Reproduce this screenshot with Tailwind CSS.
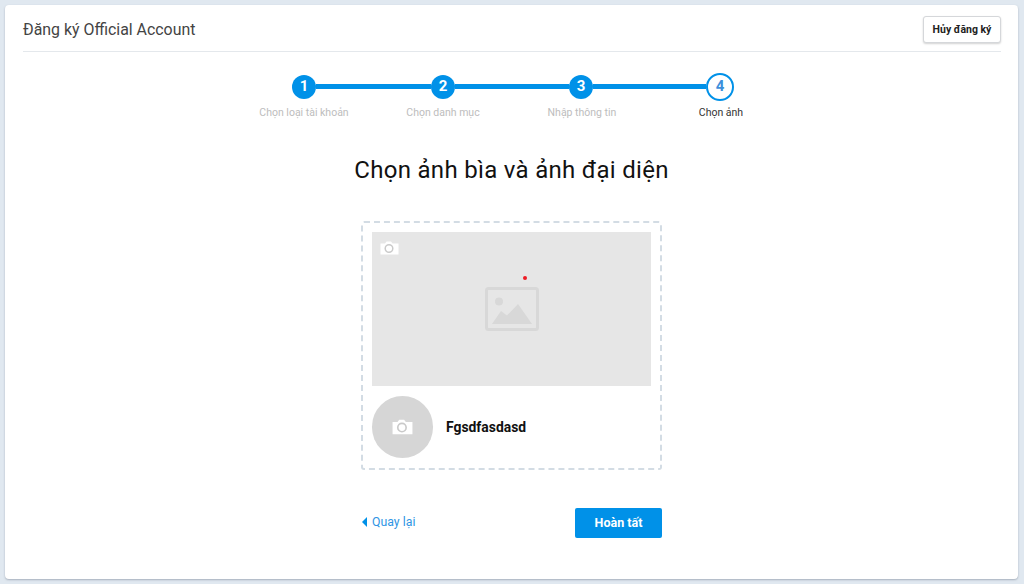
<!DOCTYPE html>
<html lang="vi">
<head>
<meta charset="utf-8">
<script src="https://cdn.jsdelivr.net/npm/@tailwindcss/browser@4"></script>
</head>
<body class="w-[1024px] h-[584px] overflow-hidden bg-[#e0e8f0] font-['Roboto',sans-serif]">
<div class="pt-[5px] pl-[5px] pr-[6px] pb-[5px] h-full">
  <main class="h-[574px] bg-white rounded-[4px] shadow-[0_1px_2px_rgba(120,130,145,0.55)] px-[18px] flex flex-col items-stretch">
    <header class="h-[47px] shrink-0 border-b border-[#e4e8ec] flex items-center justify-between pt-[3px] pr-[17px] w-[978px]">
      <h1 class="text-[15.9px] leading-[20px] text-[#444] font-normal">Đăng ký Official Account</h1>
      <button class="w-[78px] h-[27px] -mr-[17px] bg-white border border-[#d5d7da] rounded-[3px] shadow-[0_1px_2px_rgba(0,0,0,0.18)] text-[10.5px] font-bold text-[#222]">Hủy đăng ký</button>
    </header>

    <section class="ml-[269px] mt-[21px] flex items-center h-[27px]">
      <span class="w-6 h-6 rounded-full bg-[#0091e8] text-white text-[15px] font-bold flex items-center justify-center shrink-0">1</span>
      <span class="w-[115px] h-[5px] bg-[#0091e8]"></span>
      <span class="w-6 h-6 rounded-full bg-[#0091e8] text-white text-[15px] font-bold flex items-center justify-center shrink-0">2</span>
      <span class="w-[114px] h-[5px] bg-[#0091e8]"></span>
      <span class="w-6 h-6 rounded-full bg-[#0091e8] text-white text-[15px] font-bold flex items-center justify-center shrink-0">3</span>
      <span class="w-[113px] h-[5px] bg-[#0091e8]"></span>
      <span class="w-[28px] h-[28px] rounded-full bg-white border-2 border-[#0091e8] text-[#3d8fdb] text-[15px] font-bold flex items-center justify-center shrink-0">4</span>
    </section>
    <div class="ml-[211.5px] mt-[6px] flex text-[10.5px] leading-[14px] text-[#bdbdbd] text-center">
      <span class="w-[139px]">Chọn loại tài khoản</span>
      <span class="w-[139px]">Chọn danh mục</span>
      <span class="w-[139px]">Nhập thông tin</span>
      <span class="w-[139px] text-[#333]">Chọn ảnh</span>
    </div>

    <h2 class="mt-[34px] w-[1013px] -ml-[18px] text-center text-[24px] leading-[32px] font-normal text-[#111] tracking-[0.3px]">Chọn ảnh bìa và ảnh đại diện</h2>

    <section class="mt-[35px] ml-[338px] w-[301px] h-[249px] border-2 border-dashed border-[#d3dce4] rounded-[3px] p-[9px]">
      <div class="relative w-[279px] h-[154px] bg-[#e6e6e6] flex items-center justify-center">
        <svg class="absolute left-[8px] top-[9px]" width="19" height="14" viewBox="0 0 19 14">
          <path fill="#fff" d="M0.5 2.5H5L6.5 0.5H11L12.5 2.5H18.5V13.5H0.5Z"/>
          <circle cx="9" cy="7.5" r="3.8" fill="none" stroke="#cacaca" stroke-width="1.5"/>
        </svg>
        <svg width="54" height="44" viewBox="0 0 54 44">
          <rect x="1.5" y="1.5" width="51" height="41" rx="2" fill="none" stroke="#d8d8d8" stroke-width="3"/>
          <circle cx="14" cy="14.5" r="4" fill="#d8d8d8"/>
          <path fill="#d8d8d8" d="M7 37L16 24L22 28.5L33 17L47 37Z"/>
        </svg>
        <span class="absolute left-[151px] top-[44px] w-[4px] h-[4px] rounded-full bg-[#ee1c25]"></span>
      </div>
      <div class="flex items-center gap-[13px] mt-[10px]">
        <div class="w-[61px] h-[62px] rounded-full bg-[#d6d6d6] flex items-center justify-center">
          <svg width="21" height="16" viewBox="0 0 19 14">
            <path fill="#fff" d="M0.5 2.5H5L6.5 0.5H11L12.5 2.5H18.5V13.5H0.5Z"/>
            <circle cx="9" cy="7.5" r="3.8" fill="none" stroke="#cacaca" stroke-width="1.5"/>
          </svg>
        </div>
        <span class="text-[13.9px] font-bold text-[#111]">Fgsdfasdasd</span>
      </div>
    </section>

    <nav class="mt-[38px] ml-[338px] w-[301px] flex items-center justify-between">
      <a class="flex items-center gap-[5px] text-[12.3px] text-[#2f95e4] -mt-[2px] ml-[1px]">
        <svg width="5" height="10" viewBox="0 0 5 10"><path fill="#0091e8" d="M5 0V10L0 5Z"/></svg>
        Quay lại
      </a>
      <button class="w-[87px] h-[30px] bg-[#0091e8] rounded-[2px] text-white text-[12.5px] font-bold">Hoàn tất</button>
    </nav>
  </main>
</div>
</body>
</html>
